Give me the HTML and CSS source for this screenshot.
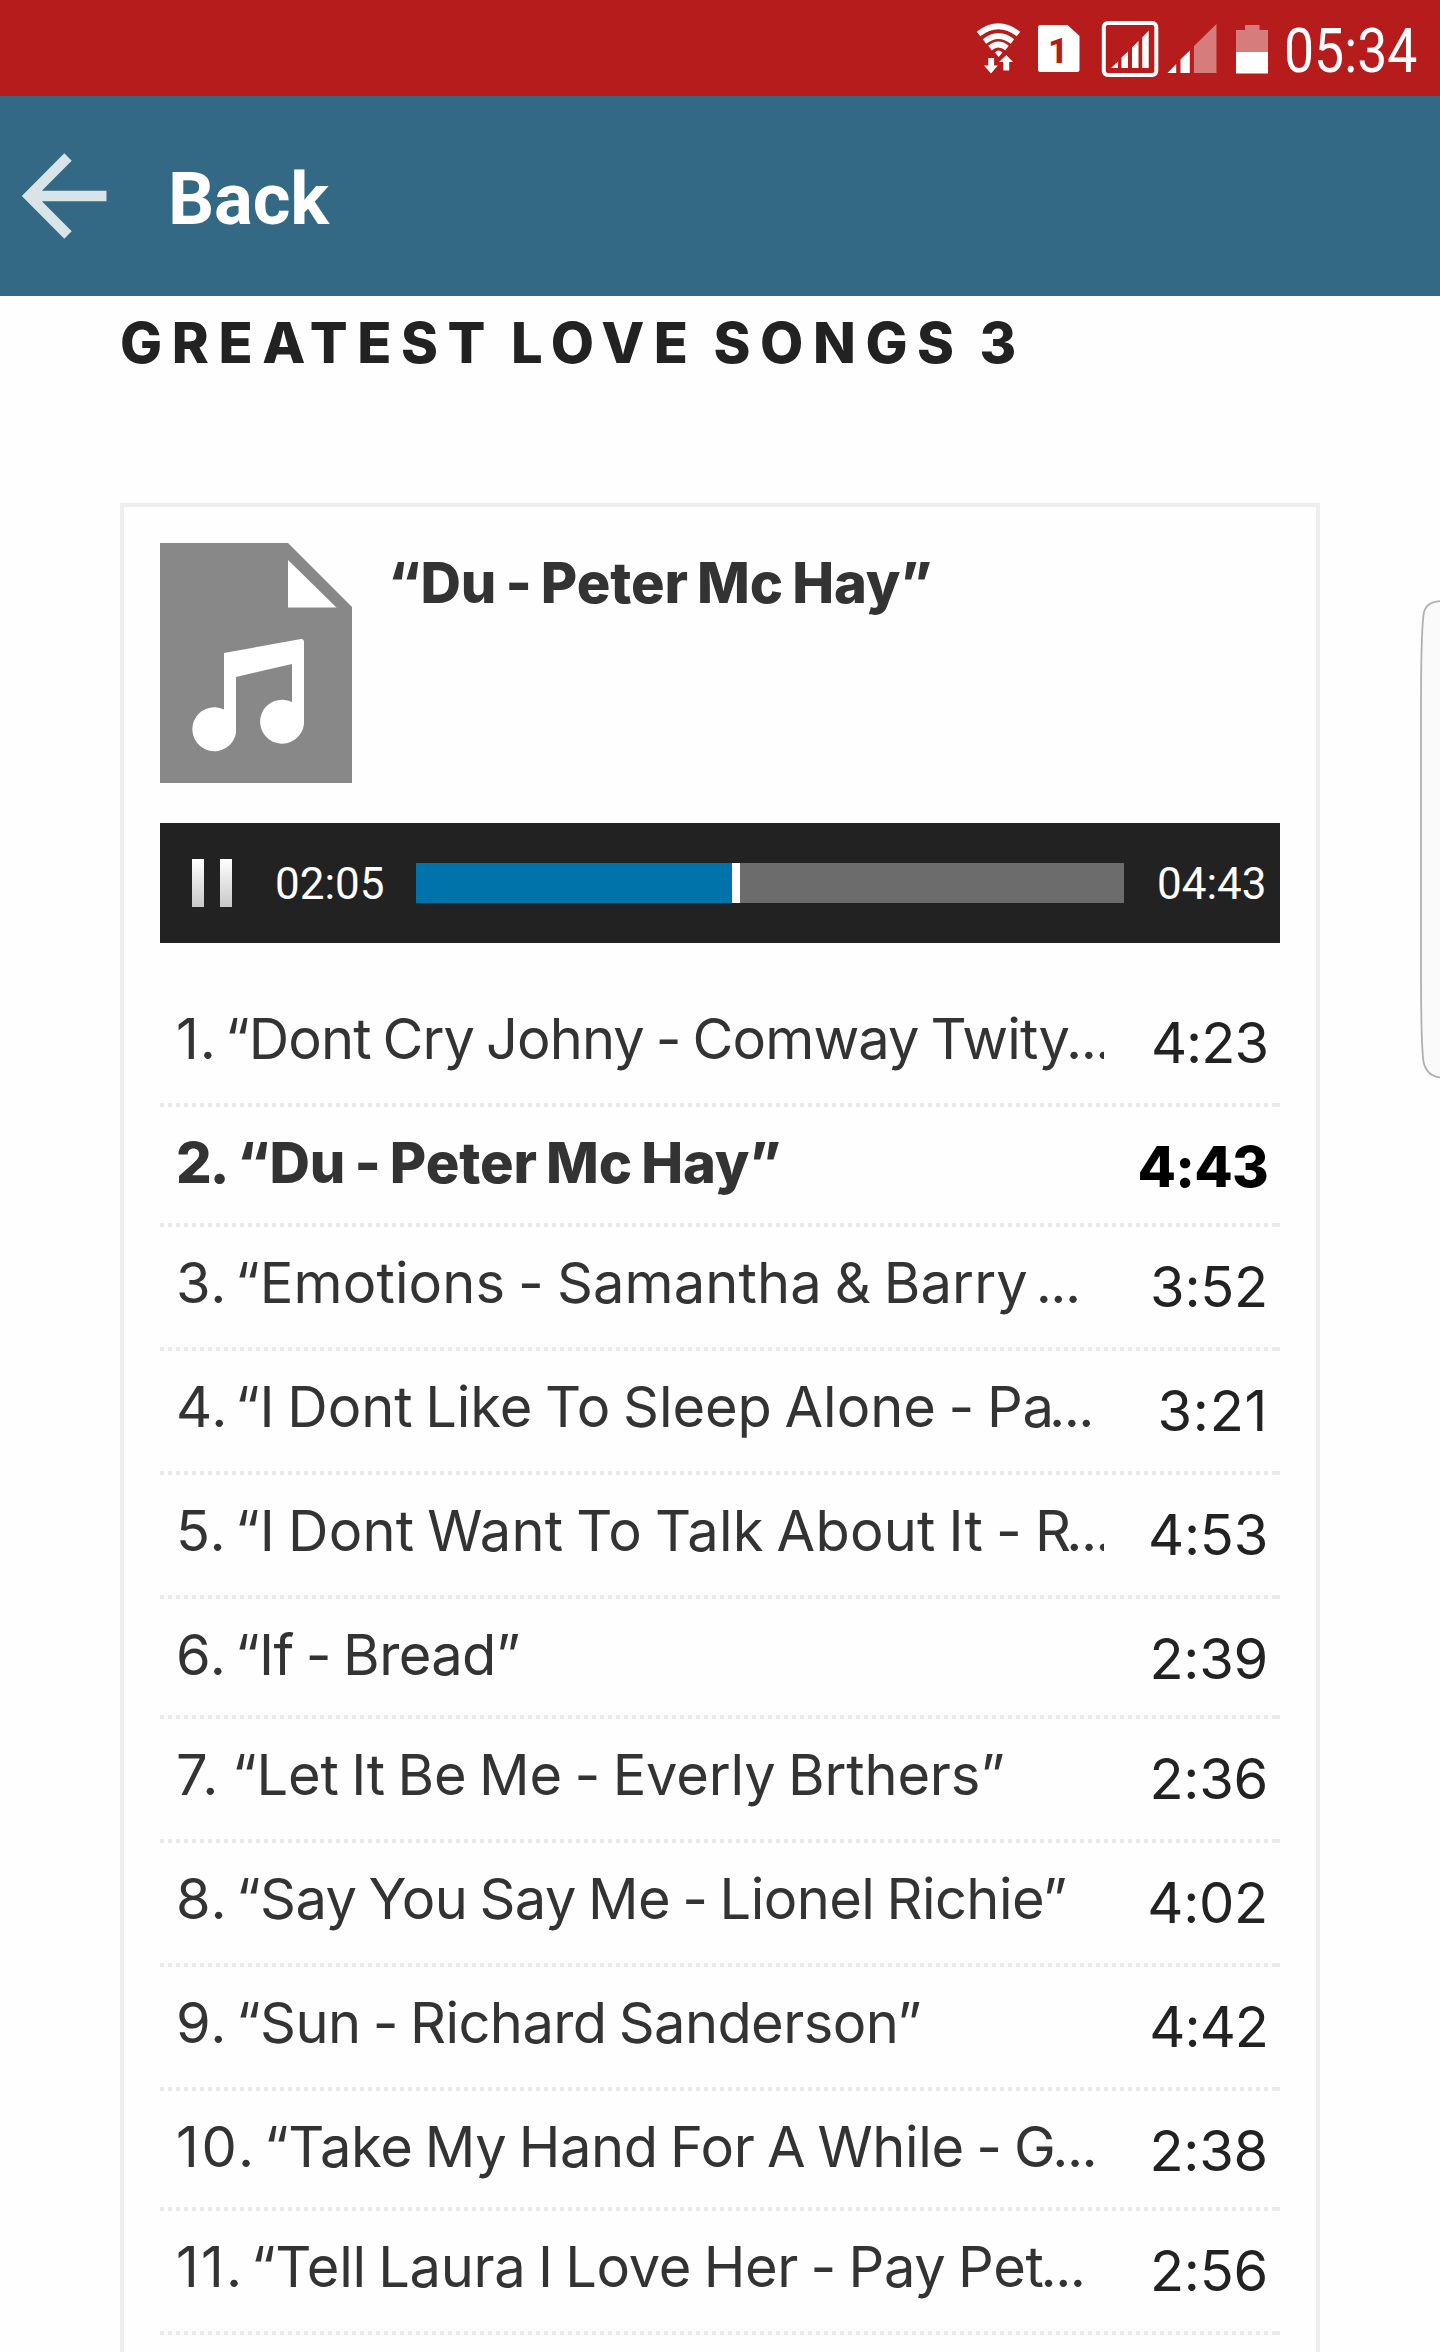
FILE: index.html
```
<!DOCTYPE html>
<html lang="en">
<head>
<meta charset="utf-8">
<title>Greatest Love Songs 3</title>
<link rel="stylesheet" href="styles.css">
</head>
<body>
<div class="status">
  <svg class="wifi" width="44" height="96" viewBox="977 0 44 96">
    <g fill="none" stroke="#fff" stroke-width="5.6">
      <path d="M978.5 34Q998.500 18.500 1018.500 34"/>
      <path d="M984.500 41.500Q998.500 30.500 1012.500 41.500"/>
      <path d="M990 48Q998.500 41 1007 48"/>
    </g>
    <path fill="#fff" d="M995 52.500Q998.500 48.500 1002.500 52.500L998.700 57ZM988.300 58h5.800v7.500h3.700L991 73.500l-7-8h4.300ZM1003.300 70.500v-8.500h-4.300l7.300-7 6.700 7h-3.800v8.500Z"/>
  </svg>
  <svg class="sim" width="42" height="96" viewBox="1037.500 0 42 96">
    <path fill="#fff" d="M1040 25h27l12 11v33.500q0 2.500-2.500 2.500h-36.500q-2.500 0-2.500-2.500v-42q0-2.500 2.500-2.500Z"/>
    <text x="1057.500" y="63" text-anchor="middle" class="sim-no">1</text>
  </svg>
  <svg class="signal-box" width="58" height="96" viewBox="1100.500 0 58 96">
    <rect x="1103.300" y="23" width="52.500" height="52" rx="4" fill="none" stroke="#fff" stroke-width="4"/>
    <path fill="#fff" d="M1110.500 68l7-6.500v6.500ZM1121 68v-10.500l6.500-6v16.500ZM1131.500 68v-20.500l6.500-6.500v27ZM1141.700 68v-30.500l6.500-7v37.500Z"/>
  </svg>
  <svg class="signal" width="50" height="96" viewBox="1166.500 0 50 96">
    <path fill="#fff" d="M1167 73l8.700-9v9ZM1180 73v-13.500l9.300-9v22.500Z"/>
    <path fill="#d67c7c" d="M1193.500 73v-27l22.500-22v49Z"/>
  </svg>
  <svg class="battery" width="32" height="96" viewBox="1236 0 32 96">
    <path fill="#d67c7c" d="M1236 52v-22h9v-5h14.500v5h8.500v22Z"/>
    <path fill="#fff" d="M1236 52h32v21.500h-32Z"/>
  </svg>
  <span class="clock">05:34</span>
</div>

<div class="toolbar">
  <svg class="arrow" width="86" height="86" viewBox="0 0 86 86">
    <path fill="none" stroke="#d9e4e8" stroke-width="10.500" d="M85.500 43H8M47 4L8.200 43l38.800 39"/>
  </svg>
  <span class="back">Back</span>
</div>

<main class="page">
  <h1 class="heading">GREATEST LOVE SONGS 3</h1>
  <section class="playlist">
    <div class="current">
      <svg class="cover" width="192" height="240" viewBox="0 0 192 240">
        <path fill="#888" d="M0 0h128l64 64v176H0Z"/>
        <path fill="#fff" d="M128 17v47.500h48.500Z"/>
        <path fill="#fff" d="M64 110l77-14q3 0 3 3v82a22 22 0 1 1-12-22v-38l-56 13v56a22 22 0 1 1-12-23.500Z"/>
      </svg>
      <span class="current-title">“Du - Peter Mc Hay”</span>
    </div>

    <div class="controls">
      <svg class="pause" width="40" height="48" viewBox="0 0 40 48">
        <defs><linearGradient id="shade" x2="0" y2="1"><stop stop-color="#fff"/><stop offset="1" stop-color="#c8c8c8"/></linearGradient></defs>
        <path fill="url(#shade)" d="M0 0h12v48H0ZM28 0h12v48H28Z"/>
      </svg>
      <span class="elapsed">02:05</span>
      <div class="rail"><div class="played"></div></div>
      <span class="total">04:43</span>
    </div>

    <ol class="tracks">
      <li class="track t1"><span class="name"><span class="no">1.</span><span class="song">“Dont Cry Johny - Comway Twity</span><span class="dots">...</span></span><span class="len">4:23</span></li>
      <li class="track t2 short playing"><span class="name"><span class="no">2.</span><span class="song">“Du - Peter Mc Hay”</span></span><span class="len">4:43</span></li>
      <li class="track t3"><span class="name"><span class="no">3.</span><span class="song">“Emotions - Samantha &amp; Barry </span><span class="dots">...</span></span><span class="len">3:52</span></li>
      <li class="track t4"><span class="name"><span class="no">4.</span><span class="song">“I Dont Like To Sleep Alone - Pa</span><span class="dots">...</span></span><span class="len">3:21</span></li>
      <li class="track t5"><span class="name"><span class="no">5.</span><span class="song">“I Dont Want To Talk About It - R</span><span class="dots">...</span></span><span class="len">4:53</span></li>
      <li class="track t6 short"><span class="name"><span class="no">6.</span><span class="song">“If - Bread”</span></span><span class="len">2:39</span></li>
      <li class="track t7"><span class="name"><span class="no">7.</span><span class="song">“Let It Be Me - Everly Brthers”</span></span><span class="len">2:36</span></li>
      <li class="track t8"><span class="name"><span class="no">8.</span><span class="song">“Say You Say Me - Lionel Richie”</span></span><span class="len">4:02</span></li>
      <li class="track t9"><span class="name"><span class="no">9.</span><span class="song">“Sun - Richard Sanderson”</span></span><span class="len">4:42</span></li>
      <li class="track t10 short"><span class="name"><span class="no">10.</span><span class="song">“Take My Hand For A While - G</span><span class="dots">...</span></span><span class="len">2:38</span></li>
      <li class="track t11"><span class="name"><span class="no">11.</span><span class="song">“Tell Laura I Love Her - Pay Pet</span><span class="dots">...</span></span><span class="len">2:56</span></li>
    </ol>
  </section>
</main>

<svg class="edge-panel" width="20" height="482" viewBox="0 0 20 482">
  <path fill="#fafafa" stroke="#b0b0b0" stroke-width="1.800" d="M22 2Q5 2 3.500 16Q1 35 1 110V370Q1 445 3.500 463Q7 478 22 478.500"/>
</svg>
</body>
</html>
```
FILE: styles.css
```
* { box-sizing: border-box; }

body {
  margin: 0;
  height: 2352px;
  overflow: hidden;
  position: relative;
  background: #fefefe;
  color: #333;
  font-family: Inter, "Liberation Sans", sans-serif;
  font-size: 56px;
}

svg { display: block; flex: none; }

/* Phone status bar */
.status {
  display: flex;
  height: 96px;
  padding-left: 977px;
  background: #b71c1c;
  color: #fff;
  font-family: Roboto, sans-serif;
}
.sim { margin-left: 16.5px; }
.sim-no { fill: #b71c1c; font: 800 35px Roboto, sans-serif; }
.signal-box { margin-left: 21px; }
.signal { margin-left: 8px; }
.battery { margin-left: 19.5px; }
.clock {
  margin-left: 16px;
  font-size: 60.5px;
  line-height: 103px;
  transform: scaleX(.885);
  transform-origin: left;
}

/* App toolbar */
.toolbar {
  display: flex;
  align-items: center;
  height: 200px;
  padding-left: 21px;
  background: #336984;
  color: #fff;
  font-family: Roboto, sans-serif;
}
.back {
  margin-left: 61px;
  padding-top: 6px;
  font-size: 72.5px;
  font-weight: 700;
  letter-spacing: -.2px;
}

/* Content */
.page { padding: 0 120px; }
.heading {
  margin: 0 0 112px;
  font-size: 56px;
  line-height: 95px;
  font-weight: 850;
  letter-spacing: 9.6px;
  word-spacing: -6px;
  white-space: nowrap;
  color: #222;
}
.playlist {
  height: 1900px;
  padding: 36px;
  border: 4px solid #eee;
}
.current {
  display: flex;
  height: 240px;
  margin-bottom: 40px;
}
.current-title {
  margin-left: 36px;
  line-height: 81px;
  font-weight: 850;
  letter-spacing: -.1px;
  word-spacing: -3px;
}

.controls {
  display: flex;
  align-items: center;
  height: 120px;
  margin-bottom: 40px;
  padding-left: 32px;
  background: #222;
  color: #fff;
  font-family: Roboto, sans-serif;
  font-size: 44px;
}
.elapsed { width: 141px; margin-left: 43px; padding-top: 1px; }
.rail { width: 708px; height: 40px; background: #6c6c6c; }
.played {
  width: 324px;
  height: 40px;
  background: #0073aa;
  border-right: 8px solid #fff;
}
.total { margin-left: 33px; padding-top: 1px; }

/* Track list */
.tracks { margin: 0; padding: 0; list-style: none; }
.track {
  display: flex;
  justify-content: space-between;
  height: 124px;
  padding: 0 12px 0 16px;
  background:
    linear-gradient(#eaeaea, #eaeaea) right bottom / 8px 4px no-repeat,
    repeating-linear-gradient(90deg, #eaeaea 0 4px, transparent 4px 8px) bottom / 100% 4px no-repeat;
  font-weight: 370;
}
.short { height: 120px; }
.name {
  width: 928px;
  overflow: hidden;
  white-space: pre;
  line-height: 113px;
  color: #333;
}
.no { display: inline-block; width: 59px; letter-spacing: 1px; }
.song { word-spacing: -3px; }
.dots { margin-left: -5px; letter-spacing: -1.5px; }
.len { line-height: 121px; letter-spacing: -.25px; color: #222; }

.playing { font-weight: 850; }
.playing .len { color: #000; letter-spacing: -.8px; }

.t1 .no { width: 49px; }
.t1 .song { letter-spacing: -.89px; }
.t1 .dots { margin-left: -3px; }
.t1 .len, .t9 .len { letter-spacing: -1px; }
.t2 .no { width: 61px; letter-spacing: -2px; }
.t2 .song { letter-spacing: -.1px; }
.t3 .song { letter-spacing: .13px; }
.t4 .song { letter-spacing: -.05px; }
.t4 .len { letter-spacing: .7px; }
.t5 .song { letter-spacing: .21px; }
.t6 .song { letter-spacing: -.6px; }
.t7 .no { width: 56px; letter-spacing: 1.5px; }
.t7 .song { letter-spacing: -.18px; }
.t8 .no, .t9 .no { width: 60px; }
.t8 .song { letter-spacing: -.57px; }
.t9 .song { letter-spacing: -.58px; }
.t10 .no { width: 88px; letter-spacing: 2.6px; }
.t10 .song { letter-spacing: -.37px; }
.t10 .dots { margin-left: -3px; }
.t11 .no { width: 75px; letter-spacing: 2.2px; }
.t11 .song { letter-spacing: -.29px; }
.t11 .dots { margin-left: -3px; }

/* System edge handle floating over the page */
.edge-panel { position: absolute; right: 0; top: 599px; }
```
